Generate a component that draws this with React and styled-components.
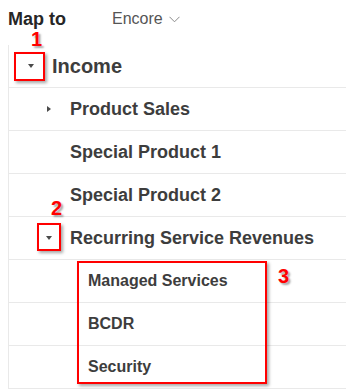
import styled, { createGlobalStyle } from 'styled-components';

const GlobalStyle = createGlobalStyle`
  body {
    margin: 0;
    background: #fff;
    font-family: "Liberation Sans", Arial, sans-serif;
  }
`;

const rows = [
  { id: 'income', label: 'Income', level: 0, toggle: 'open', size: 20 },
  { id: 'sales', label: 'Product Sales', level: 1, toggle: 'closed', size: 18 },
  { id: 'sp1', label: 'Special Product 1', level: 1, size: 18 },
  { id: 'sp2', label: 'Special Product 2', level: 1, size: 18 },
  { id: 'rsr', label: 'Recurring Service Revenues', level: 1, toggle: 'open', size: 18 },
  { id: 'ms', label: 'Managed Services', level: 2, size: 16 },
  { id: 'bcdr', label: 'BCDR', level: 2, size: 16 },
  { id: 'sec', label: 'Security', level: 2, size: 16 },
];

// annotation callouts, placed relative to their row
const notes = {
  income: { box: { left: 5, top: 7, width: 31, height: 29 }, num: '1', at: { left: 22, top: -16 } },
  rsr: { box: { left: 28, top: 6, width: 24, height: 28 }, num: '2', at: { left: 42, top: -19 } },
  ms: { box: { left: 68, top: 1, width: 190, height: 123 }, num: '3', at: { left: 269, top: 6 } },
};

function App() {
  return (
    <Page>
      <GlobalStyle />
      <Header>
        <Title>Map to</Title>
        <Picker>
          Encore
          <svg width="11" height="7" viewBox="0 0 11 7">
            <path d="M0.5 0.8 L5.5 5.8 L10.5 0.8" fill="none" stroke="#8a8a8a" strokeWidth="1" />
          </svg>
        </Picker>
      </Header>
      <Tree>
        {rows.map((row) => {
          const note = notes[row.id];
          return (
            <Row key={row.id} $level={row.level} $first={row.level === 0}>
              <Toggle>{row.toggle && <Caret $open={row.toggle === 'open'} />}</Toggle>
              <Label $size={row.size}>{row.label}</Label>
              {note && (
                <>
                  <Callout style={note.box} />
                  <Number style={note.at}>{note.num}</Number>
                </>
              )}
            </Row>
          );
        })}
      </Tree>
    </Page>
  );
}
export default App;

const Page = styled.div`
  width: 346px;
  height: 391px;
  overflow: hidden;
`;

const Header = styled.div`
  display: flex;
  align-items: center;
  height: 38px;
  padding-left: 8px;
  margin-bottom: 7px;
`;

const Title = styled.div`
  font-size: 18px;
  font-weight: bold;
  color: #262626;
  width: 104px;
`;

const Picker = styled.div`
  display: flex;
  align-items: center;
  gap: 6px;
  font-size: 16px;
  color: #555;
  svg {
    margin-top: 1px;
  }
`;

const Tree = styled.div`
  margin-left: 8px;
  border-left: 1px solid #e9e9e9;
`;

const Row = styled.div`
  position: relative;
  display: flex;
  align-items: center;
  height: 42px;
  padding-left: ${(p) => p.$level * 18}px;
  border-bottom: 1px solid #e9e9e9;
`;

const Toggle = styled.div`
  width: 43px;
  flex-shrink: 0;
  display: flex;
  justify-content: center;
  align-items: center;
`;

const Caret = styled.span`
  width: 0;
  height: 0;
  ${(p) =>
    p.$open
      ? `border-left: 3.5px solid transparent;
         border-right: 3.5px solid transparent;
         border-top: 4px solid #4a4a4a;`
      : `border-top: 3.5px solid transparent;
         border-bottom: 3.5px solid transparent;
         border-left: 4px solid #4a4a4a;`}
`;

const Label = styled.div`
  font-size: ${(p) => p.$size}px;
  font-weight: bold;
  color: #3d3d3d;
  white-space: nowrap;
`;

const Callout = styled.div`
  position: absolute;
  box-sizing: border-box;
  border: 2px solid #ff0000;
  box-shadow: 2px 2px 3px rgba(0, 0, 0, 0.35);
  z-index: 2;
`;

const Number = styled.div`
  position: absolute;
  font-size: 20px;
  line-height: 20px;
  font-weight: bold;
  color: #ff0000;
  text-shadow: 2px 2px 2px rgba(0, 0, 0, 0.35);
  z-index: 2;
`;
